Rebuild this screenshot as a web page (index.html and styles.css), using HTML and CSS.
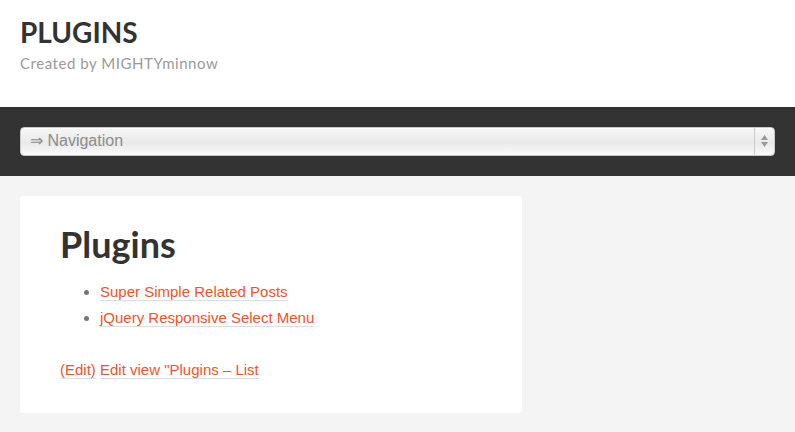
FILE: index.html
```html
<!DOCTYPE html>
<html>
<head>
<meta charset="utf-8">
<link rel="stylesheet" href="styles.css">
</head>
<body>
<header class="site-header">
  <h1 class="site-title">PLUGINS</h1>
  <p class="site-desc">Created by MIGHTYminnow</p>
</header>
<nav class="nav-bar">
  <div class="nav-select">
    <span class="nav-label">⇒ Navigation</span>
    <span class="nav-arrows">
      <svg width="9" height="14" viewBox="0 0 9 14"><path d="M4.5 1 L8 6 L1 6 Z" fill="#9a9a9a"/><path d="M1 8 L8 8 L4.5 13 Z" fill="#9a9a9a"/></svg>
    </span>
  </div>
</nav>
<main class="content">
  <article class="card">
    <h2 class="card-title">Plugins</h2>
    <ul class="plugin-list">
      <li><a href="#">Super Simple Related Posts</a></li>
      <li><a href="#">jQuery Responsive Select Menu</a></li>
    </ul>
    <p class="edit-line"><a href="#">(Edit)</a> <a href="#">Edit view "Plugins – List</a></p>
  </article>
</main>
</body>
</html>
```
FILE: styles.css
```css
html, body {
  margin: 0;
  padding: 0;
}
body {
  background: #f4f4f4;
  font-family: "Liberation Sans", Arial, sans-serif;
  font-size: 16px;
  height: 432px;
  overflow: hidden;
}
.site-header {
  background: #fff;
  padding: 16px 20px 35px;
}
.site-title {
  margin: 0;
  font-family: Lato, sans-serif;
  font-weight: 700;
  font-size: 28px;
  line-height: 1.2;
  color: #333;
}
.site-desc {
  margin: 4px 0 0;
  font-family: Lato, sans-serif;
  font-size: 15px;
  letter-spacing: 0.55px;
  line-height: 1.2;
  color: #9a9a9a;
}
.nav-bar {
  background: #333;
  padding: 20px;
}
.nav-select {
  display: flex;
  align-items: stretch;
  height: 29px;
  box-sizing: border-box;
  border: 1px solid #c8c8c8;
  border-radius: 4px;
  background: linear-gradient(#f6f6f6 0%, #ececec 45%, #e9e9e9 55%, #fafafa 100%);
  box-shadow: inset 0 1px 0 #fff;
}
.nav-label {
  flex: 1;
  display: flex;
  align-items: center;
  padding-left: 9px;
  color: #8c8c8c;
  font-size: 16px;
  line-height: 18px;
}
.nav-arrows {
  width: 19px;
  border-left: 1px solid #c9c9c9;
  display: flex;
  align-items: center;
  justify-content: center;
}
.content {
  padding: 20px;
}
.card {
  background: #fff;
  width: 502px;
  box-sizing: border-box;
  border-radius: 3px;
  padding: 26px 40px 30px;
}
.card-title {
  margin: 0;
  font-family: Lato, sans-serif;
  font-weight: 700;
  font-size: 36px;
  line-height: 1.25;
  color: #333;
}
.plugin-list {
  margin: 12px 0 0;
  padding-left: 40px;
  line-height: 26px;
  font-size: 15px;
}
.plugin-list li::marker {
  color: #777;
  font-size: 16px;
}
.card a {
  color: #f2532b;
  text-decoration: none;
  border-bottom: 1px solid #ddd;
}
.edit-line {
  margin: 26px 0 0;
  line-height: 26px;
  font-size: 15px;
}
```
